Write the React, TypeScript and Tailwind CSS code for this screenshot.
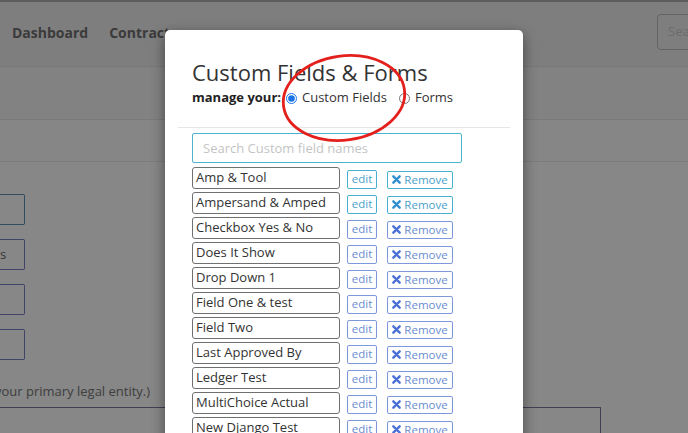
import { useState } from "react";

const felter = [
  "Amp & Tool",
  "Ampersand & Amped",
  "Checkbox Yes & No",
  "Does It Show",
  "Drop Down 1",
  "Field One & test",
  "Field Two",
  "Last Approved By",
  "Ledger Test",
  "MultiChoice Actual",
  "New Django Test",
];

function Kryss() {
  return (
    <svg width="9" height="9" viewBox="0 0 10 10" className="shrink-0">
      <path d="M1.5 1.5 L8.5 8.5 M8.5 1.5 L1.5 8.5" stroke="currentColor" strokeWidth="2.6" strokeLinecap="round" />
    </svg>
  );
}

export default function App() {
  const [valg, setValg] = useState<"felter" | "skjema">("felter");

  return (
    <div className="relative w-[688px] h-[433px] overflow-hidden bg-white text-[#333]" style={{ fontFamily: '"Open Sans", "Liberation Sans", sans-serif' }}>
      {/* Bakgrunnsside */}
      <div className="h-[2px] bg-[#b0b0b0]" />
      <div className="h-[65px] bg-[#efefef] flex items-center pb-[4px] border-b border-[#e2e2e2] shadow-[0_2px_3px_rgba(0,0,0,0.15)]">
        <span className="ml-[12px] text-[14px] font-bold text-[#707070]">Dashboard</span>
        <span className="ml-[21px] text-[14px] font-bold text-[#707070]">Contracts</span>
        <div className="ml-auto mr-[-49px] w-[80px] h-[36px] border border-[#bbb] rounded-[4px] flex items-center px-[10px] text-[13px] text-[#ccc]">
          Search
        </div>
      </div>
      <div className="h-[53px] bg-[#f6f6f6] border-b border-[#e6e6e6]" />
      <div className="h-[42px] bg-[#fdfdfd] border-b border-[#e9e9e9]" />
      <div className="pt-[32px] flex flex-col gap-[14px]">
        <div className="w-[25px] h-[31px] border border-[#5a8fb0] rounded-r-[2px] border-l-0" />
        <div className="w-[25px] h-[31px] border border-[#7b80c0] rounded-r-[2px] border-l-0 flex items-center text-[13px] text-[#666]">s</div>
        <div className="w-[25px] h-[31px] border border-[#7b80c0] rounded-r-[2px] border-l-0" />
        <div className="w-[25px] h-[31px] border border-[#7b80c0] rounded-r-[2px] border-l-0" />
      </div>
      <p className="mt-[22px] ml-[-5px] text-[13px] text-[#777]">your primary legal entity.)</p>
      <div className="mt-[5px] w-[601px] h-[40px] border-t border-r border-[#78799e]" />

      {/* Mørk overlegg */}
      <div className="absolute inset-0 bg-black/[0.47]" />

      {/* Modal */}
      <div className="absolute left-[165px] top-[30px] w-[358px] h-[420px] bg-white rounded-[5px] shadow-[0_4px_14px_rgba(0,0,0,0.45)]">
        <div className="px-[27px] pt-[27px]">
          <h4 className="text-[22px] leading-[30px] text-[#333]">Custom Fields &amp; Forms</h4>
          <div className="flex items-center h-[18px] text-[13px] mt-[2px]">
            <span className="font-bold text-[#222]">manage your:</span>
            <label className="flex items-center ml-[5px]">
              <input
                type="radio"
                checked={valg === "felter"}
                onChange={() => setValg("felter")}
                className="w-[11px] h-[11px] m-0 accent-[#1a73e8]"
              />
              <span className="ml-[5px] text-[#333]">Custom Fields</span>
            </label>
            <label className="flex items-center ml-[12px]">
              <input
                type="radio"
                checked={valg === "skjema"}
                onChange={() => setValg("skjema")}
                className="w-[11px] h-[11px] m-0"
              />
              <span className="ml-[5px] text-[#333]">Forms</span>
            </label>
          </div>
        </div>
        <div className="mx-[13px] mt-[20px] border-t border-[#e5e5e5]" />
        <div className="px-[27px] pt-[5px]">
          <input
            placeholder="Search Custom field names"
            className="w-[270px] h-[30px] border border-[#4cb3cf] rounded-[2px] px-[10px] text-[13px] outline-none placeholder:text-[#c4c4c4]"
          />
          <div className="mt-[4px] flex flex-col gap-[3px]">
            {felter.map((navn, i) => {
              const farge = i < 2 ? "border-[#4aaed2] text-[#4a9fcb]" : "border-[#7e98dc] text-[#6a8cd0]";
              const ikon = i < 2 ? "text-[#2f8fd0]" : "text-[#4a6fd6]";
              return (
                <div key={navn} className="flex items-center h-[22px]">
                  <div className="w-[148px] h-[22px] border border-[#707070] rounded-[3px] px-[3px] flex items-center text-[13px] text-[#333] whitespace-nowrap">
                    {navn}
                  </div>
                  <button className={`ml-[7px] w-[30px] h-[19px] mt-[2px] border rounded-[2px] text-[11.5px] leading-none bg-white ${farge}`}>
                    edit
                  </button>
                  <button className={`ml-[10px] w-[66px] h-[18px] mt-[3px] border rounded-[2px] flex items-center justify-center gap-[3px] text-[11.5px] leading-none bg-white ${farge}`}>
                    <span className={ikon}><Kryss /></span>
                    Remove
                  </button>
                </div>
              );
            })}
          </div>
        </div>
      </div>

      {/* Rød markering */}
      <svg className="absolute left-0 top-0 pointer-events-none" width="688" height="433">
        <ellipse cx="344" cy="98" rx="61" ry="42" transform="rotate(-8 344 98)" fill="none" stroke="#e4201c" strokeWidth="2.8" />
      </svg>
    </div>
  );
}
